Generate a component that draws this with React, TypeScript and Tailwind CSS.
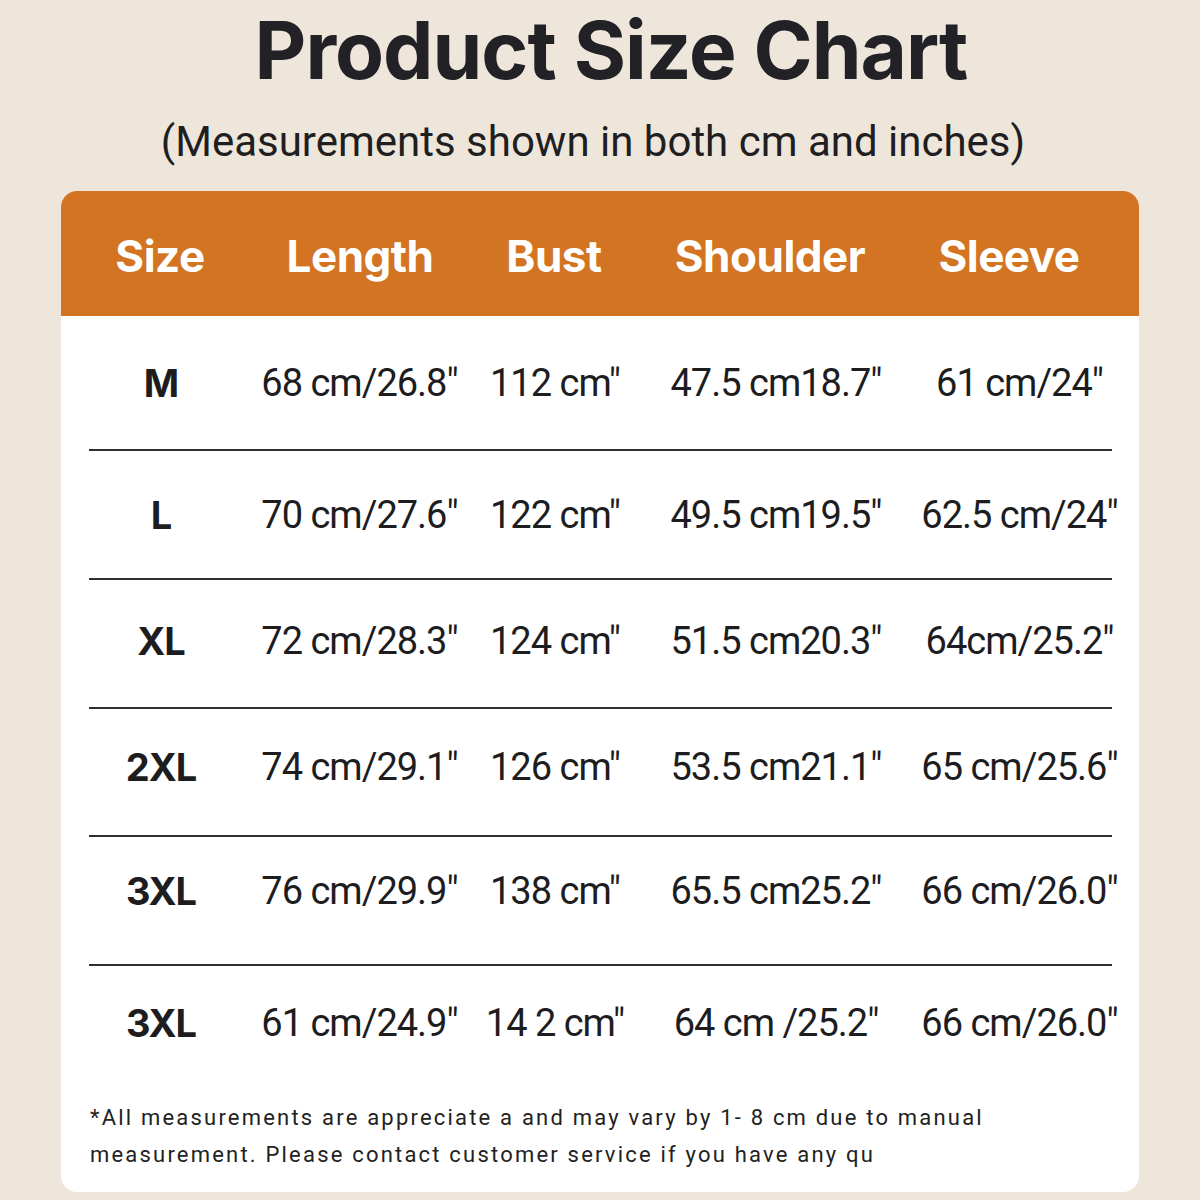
import React from "react";

const rows = [
  { pt: "pt-[45px]", h: "h-[133px]", c: ["M", "68 cm/26.8″", "112 cm″", "47.5 cm18.7″", "61 cm/24″"] },
  { pt: "pt-[42px]", h: "h-[127px]", c: ["L", "70 cm/27.6″", "122 cm″", "49.5 cm19.5″", "62.5 cm/24″"] },
  { pt: "pt-[39px]", h: "h-[127px]", c: ["XL", "72 cm/28.3″", "124 cm″", "51.5 cm20.3″", "64cm/25.2″"] },
  { pt: "pt-[36px]", h: "h-[126px]", c: ["2XL", "74 cm/29.1″", "126 cm″", "53.5 cm21.1″", "65 cm/25.6″"] },
  { pt: "pt-[32px]", h: "h-[127px]", c: ["3XL", "76 cm/29.9″", "138 cm″", "65.5 cm25.2″", "66 cm/26.0″"] },
  { pt: "pt-[35px]", h: "h-[113px]", c: ["3XL", "61 cm/24.9″", "14 2 cm″", "64 cm /25.2″", "66 cm/26.0″"] },
];

const cols = "grid grid-cols-[200px_197px_194px_248px_239px]";
const headCols = "grid grid-cols-[198px_202px_186px_246px_232px]";

export default function App() {
  return (
    <div className="w-[1200px] h-[1200px] bg-[#efe6db] flex flex-col items-center overflow-hidden" style={{ fontFamily: "Roboto, 'Liberation Sans', sans-serif" }}>
      <h1 className="mt-[5px] pl-[22px] text-[80px] leading-[90px] font-bold tracking-[-1px] text-[#222126] whitespace-nowrap" style={{ fontFamily: "Inter, Roboto, sans-serif" }}>
        Product Size Chart
      </h1>
      <p className="mt-[22px] pr-[14px] text-[42px] leading-[50px] text-[#1f1f22] whitespace-nowrap">(Measurements shown in both cm and inches)</p>
      <div className="mt-[24px] w-[1078px] bg-white rounded-[16px] overflow-hidden flex flex-col">
        <div className={`${headCols} h-[125px] bg-[#d27421] items-center text-white text-[44px] font-bold tracking-[-0.5px]`} style={{ fontFamily: "Inter, Roboto, sans-serif" }}>
          <div className="text-center pt-[4px]">Size</div>
          <div className="text-center pt-[4px]">Length</div>
          <div className="text-center pt-[4px]">Bust</div>
          <div className="text-center pt-[4px]">Shoulder</div>
          <div className="text-center pt-[4px]">Sleeve</div>
        </div>
        {rows.map((r, i) => (
          <div key={i} className="flex flex-col">
            <div className={`${cols} ${r.h} ${r.pt} items-start text-[38px] leading-[44px] text-[#1d1d1f] tracking-[-1px] whitespace-nowrap`}>
              <div className="text-center font-bold" style={{ fontFamily: "Inter, Roboto, sans-serif" }}>{r.c[0]}</div>
              <div className="text-center">{r.c[1]}</div>
              <div className="text-center">{r.c[2]}</div>
              <div className="text-center">{r.c[3]}</div>
              <div className="text-center">{r.c[4]}</div>
            </div>
            {i < rows.length - 1 && <div className="ml-[28px] mr-[27px] h-[2px] bg-[#2e2e2e]" />}
          </div>
        ))}
        <div className="pl-[29px] pt-[20px] pb-[19px] text-[22px] leading-[37px] tracking-[2.2px] text-[#222] whitespace-nowrap">
          <div>*All measurements are appreciate a and may vary by 1- 8 cm due to manual</div>
          <div>measurement. Please contact customer service if you have any qu</div>
        </div>
      </div>
    </div>
  );
}
